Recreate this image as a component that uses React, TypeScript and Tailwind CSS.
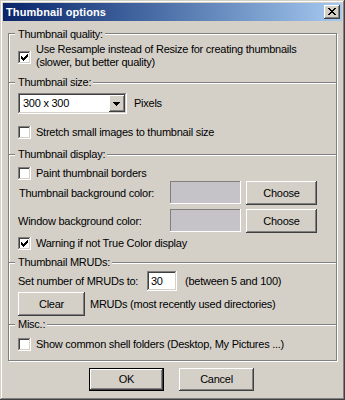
import React from "react";

const raised =
  "shadow-[inset_-1px_-1px_0_#404040,inset_1px_1px_0_#ffffff,inset_-2px_-2px_0_#808080]";
const sunken =
  "shadow-[inset_-1px_-1px_0_#ffffff,inset_1px_1px_0_#808080,inset_-2px_-2px_0_#d4d0c8,inset_2px_2px_0_#404040]";

function Checkbox({ checked, className = "" }: { checked?: boolean; className?: string }) {
  const cols = [2, 3, 4, 3, 2, 1, 0];
  return (
    <span className={`block w-[13px] h-[13px] shrink-0 bg-white ${sunken} ${className}`}>
      {checked && (
        <svg width="13" height="13" viewBox="0 0 13 13" className="block" shapeRendering="crispEdges">
          {cols.map((s, i) => (
            <rect key={i} x={3 + i} y={3 + s} width="1" height="3" fill="#000" />
          ))}
        </svg>
      )}
    </span>
  );
}

function Btn({ children, className = "" }: { children: React.ReactNode; className?: string }) {
  return (
    <div className={`flex items-center justify-center bg-[#d4d0c8] ${raised} ${className}`}>
      {children}
    </div>
  );
}

function Label({ children, top = "-mt-[7px]" }: { children: React.ReactNode; top?: string }) {
  return (
    <span className={`self-start ${top} ml-[6px] pl-[3px] pr-[2px] bg-[#d4d0c8] leading-[13px]`}>
      {children}
    </span>
  );
}

const sec = "flex flex-col border-t border-[#808080] shadow-[inset_0_1px_0_#ffffff]";

export default function App() {
  return (
    <div className="w-[345px] h-[400px] bg-[#d4d0c8] p-[3px] flex flex-col text-[11px] tracking-[-0.25px] text-black font-['Liberation_Sans',Arial,sans-serif] shadow-[inset_-1px_-1px_0_#404040,inset_1px_1px_0_#d4d0c8,inset_-2px_-2px_0_#808080,inset_2px_2px_0_#ffffff]">
      {/* Title bar */}
      <div className="h-[18px] shrink-0 flex items-center justify-between bg-linear-to-r from-[#0a246a] to-[#a6caf0] pl-[3px] pr-[2px]">
        <span className="text-white font-bold text-[11px] tracking-[0.1px] leading-[18px]">Thumbnail options</span>
        <div className={`w-[16px] h-[14px] bg-[#d4d0c8] ${raised}`}>
          <svg width="16" height="14" viewBox="0 0 16 14" className="block" shapeRendering="crispEdges">
            <path
              fill="#000"
              d="M4 3h2v1H4zM10 3h2v1h-2zM5 4h2v1H5zM9 4h2v1H9zM6 5h4v1H6zM7 6h2v1H7zM6 7h4v1H6zM5 8h2v1H5zM9 8h2v1H9zM4 9h2v1H4zM10 9h2v1h-2z"
            />
          </svg>
        </div>
      </div>

      <div className="px-[5px] pt-[12px] flex flex-col">
        <div className="w-[329px] flex flex-col border border-[#808080] shadow-[1px_1px_0_#ffffff,inset_1px_1px_0_#ffffff]">
          {/* Thumbnail quality */}
          <div className="flex flex-col h-[48px]">
            <Label top="-mt-[6px]">Thumbnail quality:</Label>
            <div className="flex items-start pl-[9px] mt-[2px]">
              <Checkbox checked className="mt-[8px]" />
              <span className="ml-[5px] leading-[13px]">
                Use Resample instead of Resize for creating thumbnails
                <br />
                (slower, but better quality)
              </span>
            </div>
          </div>

          {/* Thumbnail size */}
          <div className={`${sec} h-[72px]`}>
            <Label>Thumbnail size:</Label>
            <div className="flex items-center pl-[9px] mt-[4px]">
              <div className={`w-[109px] h-[21px] bg-white flex items-center justify-between pl-[5px] pr-[2px] ${sunken}`}>
                <span className="leading-[13px]">300 x 300</span>
                <div className={`w-[16px] h-[17px] bg-[#d4d0c8] ${raised}`}>
                  <svg width="16" height="17" viewBox="0 0 16 17" className="block" shapeRendering="crispEdges">
                    <path fill="#000" d="M4 7h7v1H4zM5 8h5v1H5zM6 9h3v1H6zM7 10h1v1H7z" />
                  </svg>
                </div>
              </div>
              <span className="ml-[7px] leading-[13px]">Pixels</span>
            </div>
            <div className="flex items-center pl-[9px] mt-[12px]">
              <Checkbox />
              <span className="ml-[5px] leading-[13px]">Stretch small images to thumbnail size</span>
            </div>
          </div>

          {/* Thumbnail display */}
          <div className={`${sec} h-[108px]`}>
            <Label>Thumbnail display:</Label>
            <div className="flex items-center pl-[9px] mt-[6px]">
              <Checkbox />
              <span className="ml-[5px] leading-[13px]">Paint thumbnail borders</span>
            </div>
            <div className="flex items-start pl-[10px] mt-[1px]">
              <span className="w-[151px] self-center leading-[13px]">Thumbnail background color:</span>
              <div className={`w-[71px] h-[23px] bg-[#c6c3c8] shadow-[inset_-1px_-1px_0_#ffffff,inset_1px_1px_0_#808080]`} />
              <Btn className="w-[71px] h-[24px] ml-[5px]">Choose</Btn>
            </div>
            <div className="flex items-start pl-[9px] mt-[4px]">
              <span className="w-[152px] self-center leading-[13px]">Window background color:</span>
              <div className={`w-[71px] h-[23px] bg-[#c6c3c8] shadow-[inset_-1px_-1px_0_#ffffff,inset_1px_1px_0_#808080]`} />
              <Btn className="w-[71px] h-[24px] ml-[5px]">Choose</Btn>
            </div>
            <div className="flex items-center pl-[9px] mt-[4px]">
              <Checkbox checked />
              <span className="ml-[5px] leading-[13px]">Warning if not True Color display</span>
            </div>
          </div>

          {/* Thumbnail MRUDs */}
          <div className={`${sec} h-[62px]`}>
            <Label>Thumbnail MRUDs:</Label>
            <div className="flex items-center pl-[9px] mt-[2px]">
              <span className="w-[129px] leading-[13px]">Set number of MRUDs to:</span>
              <div className={`w-[30px] h-[20px] bg-white flex items-center pl-[4px] ${sunken}`}>
                <span className="leading-[13px]">30</span>
              </div>
              <span className="ml-[8px] leading-[13px]">(between 5 and 100)</span>
            </div>
            <div className="flex items-center pl-[9px] mt-[1px]">
              <Btn className="w-[67px] h-[24px]">Clear</Btn>
              <span className="ml-[5px] leading-[13px]">MRUDs (most recently used directories)</span>
            </div>
          </div>

          {/* Misc */}
          <div className={`${sec} h-[36px]`}>
            <Label>Misc.:</Label>
            <div className="flex items-center pl-[9px] mt-[7px]">
              <Checkbox />
              <span className="ml-[5px] leading-[13px]">Show common shell folders (Desktop, My Pictures ...)</span>
            </div>
          </div>
        </div>

        <div className="flex mt-[7px] pl-[81px] gap-[15px]">
          <div className="w-[75px] h-[23px] border border-black">
            <Btn className="w-full h-full">OK</Btn>
          </div>
          <Btn className="w-[75px] h-[23px]">Cancel</Btn>
        </div>
      </div>
    </div>
  );
}
